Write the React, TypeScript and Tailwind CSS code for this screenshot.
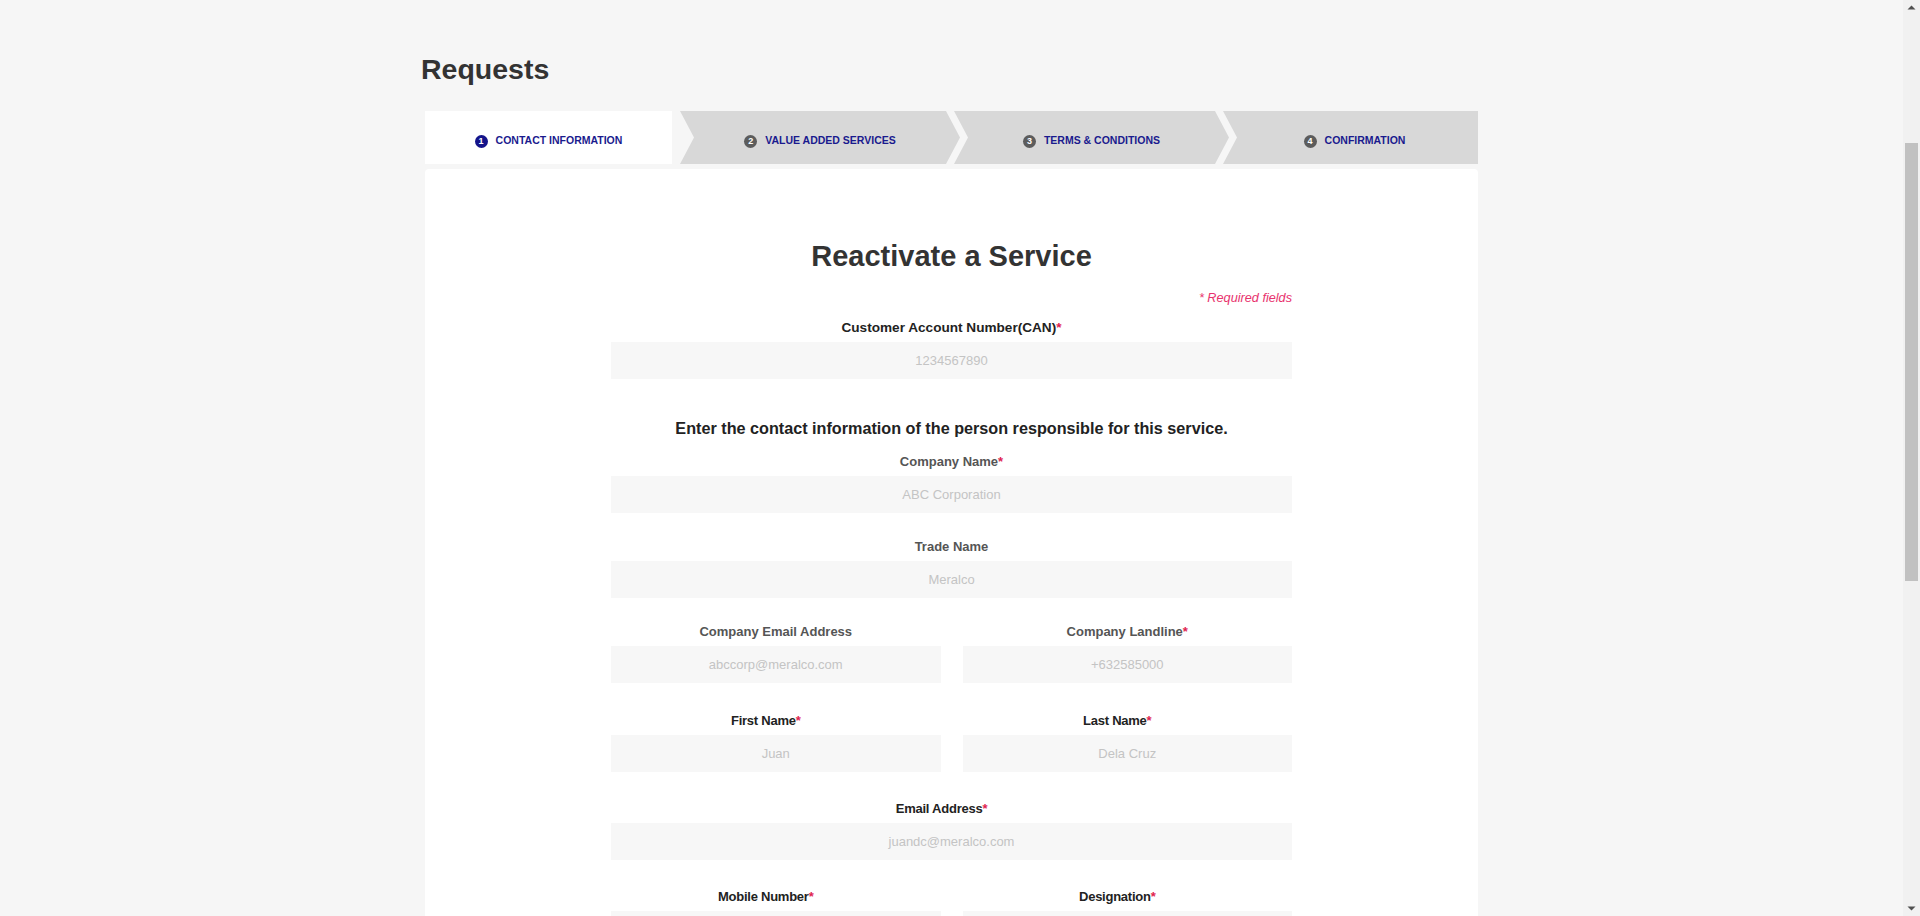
import React from "react"

const STEPS = [
  { n: 1, label: "Contact Information" },
  { n: 2, label: "Value Added Services" },
  { n: 3, label: "Terms & Conditions" },
  { n: 4, label: "Confirmation" },
]

function StepLabel({ n, label, active }: { n: number; label: string; active?: boolean }) {
  return (
    <div className="flex items-center gap-2">
      <span
        className={
          active
            ? "flex h-[13px] w-[13px] items-center justify-center rounded-full bg-[#14148a] text-[9px] font-bold leading-none text-white"
            : "flex h-[13px] w-[13px] items-center justify-center rounded-full bg-[#5c5c5c] text-[9px] font-bold leading-none text-white"
        }
      >
        {n}
      </span>
      <span className="text-[10.5px] font-bold uppercase text-[#1a1a8e]">{label}</span>
    </div>
  )
}

function Stepper() {
  return (
    <div className="flex h-[53px]">
      {/* step 1 — active */}
      <div className="flex w-[247px] items-center justify-center bg-white pt-[7px]">
        <StepLabel n={STEPS[0].n} label={STEPS[0].label} active />
      </div>
      {/* step 2 */}
      <div className="ml-[8px] flex w-[280px] items-center justify-center bg-[#d8d8d8] pt-[7px] [clip-path:polygon(0_0,calc(100%_-_14px)_0,100%_50%,calc(100%_-_14px)_100%,0_100%,14px_50%)]">
        <StepLabel n={STEPS[1].n} label={STEPS[1].label} />
      </div>
      {/* step 3 */}
      <div className="ml-[-6px] flex w-[275px] items-center justify-center bg-[#d8d8d8] pt-[7px] [clip-path:polygon(0_0,calc(100%_-_14px)_0,100%_50%,calc(100%_-_14px)_100%,0_100%,14px_50%)]">
        <StepLabel n={STEPS[2].n} label={STEPS[2].label} />
      </div>
      {/* step 4 */}
      <div className="ml-[-6px] flex flex-1 items-center justify-center bg-[#d8d8d8] pl-[8px] pt-[7px] [clip-path:polygon(0_0,100%_0,100%_100%,0_100%,14px_50%)]">
        <StepLabel n={STEPS[3].n} label={STEPS[3].label} />
      </div>
    </div>
  )
}

function Field({
  label,
  placeholder,
  required,
  muted,
  wide,
}: {
  label: string
  placeholder: string
  required?: boolean
  muted?: boolean
  wide?: boolean
}) {
  // muted labels sit centred; the dark ones are a touch narrower and pulled left
  let labelCls = "text-center text-[13px] font-bold leading-[18px] text-[#222222] tracking-[-0.25px] pr-[20px]"
  if (muted) labelCls = "text-center text-[13px] font-bold leading-[18px] text-[#555555]"
  if (wide) labelCls = "text-center text-[13.6px] font-bold leading-[18px] text-[#222222]"

  return (
    <div className="flex flex-1 flex-col">
      <label className={labelCls}>
        {label}
        {required && <span className="text-[#e0244f]">*</span>}
      </label>
      <input
        readOnly
        placeholder={placeholder}
        className="mt-[5px] h-[37px] w-full bg-[#f7f7f7] text-center text-[13px] text-[#333] outline-none placeholder:text-[#c4c4c4]"
      />
    </div>
  )
}

function Scrollbar() {
  return (
    <div className="flex h-full w-[17px] flex-col items-center bg-[#f1f1f1]">
      <svg width="9" height="9" viewBox="0 0 9 9" className="mt-[3px]">
        <path d="M0.5 6.5 L4.5 2.5 L8.5 6.5 Z" fill="#505050" />
      </svg>
      <div className="mt-[131px] h-[438px] w-[13px] bg-[#c1c1c1]" />
      <div className="flex-1" />
      <svg width="9" height="9" viewBox="0 0 9 9" className="mb-[3px]">
        <path d="M0.5 2.5 L4.5 6.5 L8.5 2.5 Z" fill="#505050" />
      </svg>
    </div>
  )
}

export default function App() {
  return (
    <div className="flex h-[916px] overflow-hidden bg-[#f6f6f6] font-['Liberation_Sans',Arial,sans-serif] text-[#333]">
      <main className="flex-1 overflow-hidden">
        <div className="mx-auto w-[1061px] pt-[53px]">
          <h1 className="text-[28.5px] font-bold leading-[32px] text-[#333333]">Requests</h1>

          <div className="mt-[26px] px-[4px]">
            <Stepper />

            {/* form card */}
            <div className="mt-[5px] rounded-[4px] bg-white pb-10 pt-[71px]">
              <h2 className="text-center text-[29px] font-bold leading-[32px] text-[#333333]">
                Reactivate a Service
              </h2>

              <div className="mx-auto w-[681px]">
                <p className="mt-[18px] text-right text-[12.7px] italic leading-[16px] text-[#e8336e]">
                  * Required fields
                </p>

                <div className="mt-[13px]">
                  <Field label="Customer Account Number(CAN)" placeholder="1234567890" required wide />
                </div>

                <h3 className="mt-[39px] text-center text-[16.2px] font-bold leading-[20px] text-[#222222]">
                  Enter the contact information of the person responsible for this service.
                </h3>

                <div className="mt-[15px]">
                  <Field label="Company Name" placeholder="ABC Corporation" required muted />
                </div>
                <div className="mt-[25px]">
                  <Field label="Trade Name" placeholder="Meralco" muted />
                </div>
                <div className="mt-[25px] flex gap-[22px]">
                  <Field label="Company Email Address" placeholder="abccorp@meralco.com" muted />
                  <Field label="Company Landline" placeholder="+632585000" required muted />
                </div>
                <div className="mt-[29px] flex gap-[22px]">
                  <Field label="First Name" placeholder="Juan" required />
                  <Field label="Last Name" placeholder="Dela Cruz" required />
                </div>
                <div className="mt-[28px]">
                  <Field label="Email Address" placeholder="juandc@meralco.com" required />
                </div>
                <div className="mt-[28px] flex gap-[22px]">
                  <Field label="Mobile Number" placeholder="09171234567" required />
                  <Field label="Designation" placeholder="Manager" required />
                </div>
              </div>
            </div>
          </div>
        </div>
      </main>
      <Scrollbar />
    </div>
  )
}
